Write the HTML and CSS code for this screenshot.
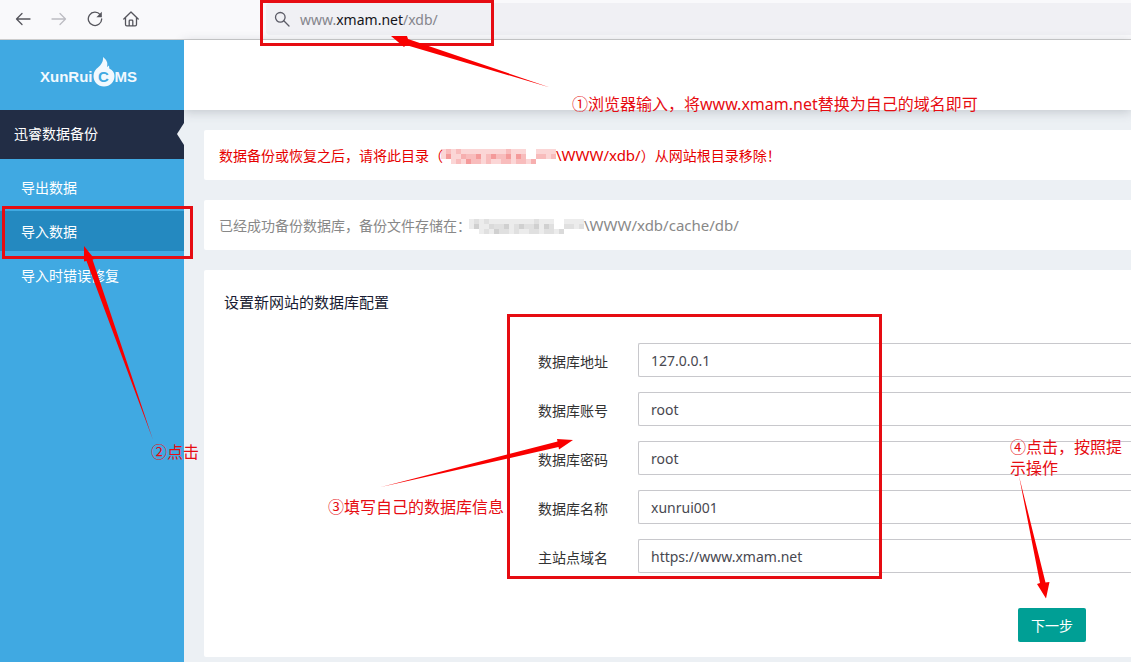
FILE: index.html
```html
<!DOCTYPE html>
<html lang="zh-CN">

<head>
    <meta charset="UTF-8">
    <meta name="viewport" content="width=device-width, initial-scale=1.0">
    <title>迅睿数据备份</title>
    <link rel="stylesheet" href="styles.css">
</head>

<body>

    <div class="browser-bar">
        <div class="browser-buttons">
            <button type="button" aria-label="后退">
                <svg viewBox="0 0 16 16" width="16" height="16"><path d="M15 8H1.5M7 2.5L1.5 8L7 13.5"/></svg>
            </button>
            <button type="button" class="disabled" aria-label="前进" disabled>
                <svg viewBox="0 0 16 16" width="16" height="16"><path d="M1 8h13.5M9 2.5L14.5 8L9 13.5"/></svg>
            </button>
            <button type="button" aria-label="刷新">
                <svg viewBox="0 0 16 16" width="16" height="16"><path d="M13.2 3.6A6.7 6.7 0 1 0 14.7 8"/><path class="solid" d="M14.8 .8v5.4H9.4z"/></svg>
            </button>
            <button type="button" aria-label="主页">
                <svg viewBox="0 0 16 16" width="16" height="16"><path d="M.8 8L8 1l7.200 7M2.500 6.800v6.700q0 1.300 1.300 1.300h8.400q1.300 0 1.300-1.300V6.800M6.200 14.500V10q0-.8.8-.8h2q.8 0 .8.8v4.500"/></svg>
            </button>
        </div>
        <div class="address-bar">
            <svg viewBox="0 0 16 16" width="16" height="16"><circle cx="6.300" cy="6.300" r="4.800"/><path d="M9.800 9.800L15 15"/></svg>
            <div class="url" role="textbox" aria-label="地址" contenteditable="true" spellcheck="false">www.<b>xmam.net</b>/xdb/</div>
        </div>
    </div>

    <div class="page">
        <aside class="sidebar">
            <a href="#" class="logo" aria-label="XunRuiCMS">
                <span>XunRui</span>
                <span class="flame">
                    <svg viewBox="0 0 22 30" width="22" height="30"><path d="M10 0c4 3 5 6 4 10l2-1.500.3 3C20 13 21.500 16 21.500 19c0 6-4.500 10.500-10.500 10.500S.5 25 .5 19c0-4 2-6.500 4.500-8.500C8 8 10.500 4.500 10 0z"/></svg>
                    <b>C</b>
                </span>
                <span>MS</span>
            </a>
            <h1 class="menu-title">迅睿数据备份</h1>
            <nav class="menu">
                <a href="#">导出数据</a>
                <a href="#" class="active">导入数据</a>
                <a href="#">导入时错误修复</a>
            </nav>
        </aside>

        <main class="main">
            <div class="topbar"></div>
            <div class="content">
                <div class="note note-danger">
                    数据备份或恢复之后，请将此目录（<svg class="mosaic" viewBox="0 0 23 3" width="115" height="15" preserveAspectRatio="none" shape-rendering="crispEdges">
                        <g id="mosaic">
                            <path opacity=".16" d="M0 0h17v2H0zM2 2h17v1H2zM19 0h4v2h-4z"/>
                            <path opacity=".12" d="M1 0h1v2H1zM3 0h1v1H3zM5 1h3v2H5zM9 1h5v1H9zM13 0h1v1h-1zM15 1h2v2h-2zM19 1h2v1h-2zM22 1h1v1h-1zM3 2h1v1H3zM9 2h1v1H9zM12 2h2v1h-2z"/>
                            <path opacity=".18" d="M1 1h1v1H1zM4 1h1v1H4zM7 1h1v1H7zM10 1h1v1h-1zM13 1h1v1h-1zM15 1h1v1h-1zM5 2h1v1H5zM18 2h1v1h-1z"/>
                        </g>
                    </svg><span class="path">\WWW/xdb/</span>）从网站根目录移除！
                </div>
                <div class="note">
                    已经成功备份数据库，备份文件存储在：<svg class="mosaic" viewBox="0 0 23 3" width="115" height="15" preserveAspectRatio="none" shape-rendering="crispEdges"><use href="#mosaic"/></svg><span class="path">\WWW/xdb/cache/db/</span>
                </div>

                <form class="card">
                    <h2>设置新网站的数据库配置</h2>
                    <div class="form-group">
                        <label for="host">数据库地址</label>
                        <input type="text" id="host" value="127.0.0.1">
                    </div>
                    <div class="form-group">
                        <label for="user">数据库账号</label>
                        <input type="text" id="user" value="root">
                    </div>
                    <div class="form-group">
                        <label for="pass">数据库密码</label>
                        <input type="text" id="pass" value="root">
                    </div>
                    <div class="form-group">
                        <label for="dbname">数据库名称</label>
                        <input type="text" id="dbname" value="xunrui001">
                    </div>
                    <div class="form-group">
                        <label for="domain">主站点域名</label>
                        <input type="text" id="domain" value="https://www.xmam.net">
                    </div>
                    <div class="form-actions">
                        <button type="button" class="btn">下一步</button>
                    </div>
                </form>
            </div>
        </main>
    </div>

    <!-- Tutorial marks over the page -->
    <div class="marks">
        <svg width="1131" height="662" viewBox="0 0 1131 662">
            <g class="frames">
                <rect x="261.500" y="1.500" width="231" height="43"/>
                <rect x="3.500" y="207.500" width="188" height="50"/>
                <rect x="508.500" y="315.500" width="372" height="262"/>
            </g>
            <g class="arrows">
                <path d="M391 36L407 36L408 39L550 87.500L406 45L404 47z"/>
                <path d="M84 246L94.500 259L92.500 259.500L153 440L86.500 261L84 261.500z"/>
                <path d="M573 440L559 449.500L558.500 447L381 487L557.500 441.500L557 439z"/>
                <path d="M1046 598.500L1037 584L1040 583L1019 476L1045.500 582.500L1049.500 582z"/>
            </g>
        </svg>
        <p class="mark mark-url">①浏览器输入，将www.xmam.net替换为自己的域名即可</p>
        <p class="mark mark-menu">②点击</p>
        <p class="mark mark-form">③填写自己的数据库信息</p>
        <p class="mark mark-next">④点击，按照提示操作</p>
    </div>

</body>

</html>
```

FILE: styles.css
```css
* {
    margin: 0;
    padding: 0;
    box-sizing: border-box;
}

body {
    position: relative;
    display: flex;
    flex-direction: column;
    min-height: 100vh;
    overflow: hidden;
    font-family: "Noto Sans", "Noto Sans CJK SC", sans-serif;
    font-size: 14px;
    line-height: 20px;
    color: #333;
    background: #ecf0f4;
}

/* Browser bar */
.browser-bar {
    display: flex;
    height: 40px;
    padding: 3px 0 4px 15px;
    background: #f9f9fb;
    border-bottom: 1px solid #ccc;
}

.browser-buttons {
    display: flex;
    align-items: center;
    gap: 20px;
    width: 251px;
}

.browser-buttons button {
    width: 16px;
    height: 16px;
    border: none;
    background: none;
    color: #55555c;
}

.browser-buttons .disabled {
    color: #bcbcc2;
}

.browser-bar svg {
    display: block;
    fill: none;
    stroke: currentColor;
    stroke-width: 1.3;
    stroke-linecap: round;
    stroke-linejoin: round;
}

.browser-bar .solid {
    fill: currentColor;
    stroke: none;
}

.address-bar {
    flex: 1;
    display: flex;
    align-items: center;
    gap: 10px;
    padding-left: 8px;
    color: #5b5b66;
    background: #f0f0f4;
    border-radius: 4px 0 0 4px;
}

.url {
    padding-top: 2px;
    font-size: 14px;
    color: #85858c;
}

.url b {
    font-weight: 400;
    color: #15141a;
}

.page {
    flex: 1;
    display: flex;
}

/* Sidebar */
.sidebar {
    position: relative;
    z-index: 1;
    width: 184px;
    background: #40a9e2;
}

.logo {
    display: flex;
    align-items: center;
    height: 70px;
    padding: 4px 0 0 40px;
    font-family: "Liberation Sans", sans-serif;
    font-size: 15px;
    font-weight: bold;
    color: #f2f9fe;
    text-decoration: none;
}

.flame {
    display: grid;
    place-items: center;
    margin-top: -10px;
}

.flame svg,
.flame b {
    grid-area: 1 / 1;
}

.flame svg {
    fill: currentColor;
}

.flame b {
    padding-top: 10px;
    color: #40a9e2;
}

.menu-title {
    display: flex;
    align-items: center;
    justify-content: space-between;
    height: 49px;
    padding: 0 0 2px 14px;
    font-size: 14px;
    font-weight: 400;
    color: #fff;
    background: #222d45;
}

.menu-title::after {
    content: "";
    border: solid transparent;
    border-width: 11px 7px 11px 0;
    border-right-color: #ecf0f4;
}

.menu {
    display: flex;
    flex-direction: column;
    gap: 4px;
    padding-top: 8px;
}

.menu a {
    padding: 11px 21px 9px;
    color: #fff;
    text-decoration: none;
}

.menu a.active {
    background: #2489c0;
}

/* Content */
.main {
    flex: 1;
    min-width: 0;
}

.topbar {
    height: 70px;
    background: #fff;
    box-shadow: 0 2px 10px rgba(70, 80, 90, 0.25);
}

.content {
    display: flex;
    flex-direction: column;
    gap: 20px;
    padding: 20px 0 5px 20px;
}

.note {
    padding: 16px 15px 14px;
    color: #888;
    background: #fff;
    border-radius: 2px 0 0 2px;
    white-space: nowrap;
}

.note-danger {
    color: #e60000;
}

.path {
    font-size: 15px;
    line-height: 1;
}

.mosaic {
    vertical-align: -3px;
    margin-left: -2px;
    fill: currentColor;
}

.card {
    padding: 20px 0 15px 20px;
    background: #fff;
    border-radius: 2px 0 0 2px;
}

.card h2 {
    margin-bottom: 29px;
    font-size: 15px;
    font-weight: 400;
    line-height: 24px;
    color: #181c32;
}

.form-group {
    display: flex;
    align-items: center;
    gap: 30px;
    margin-bottom: 15px;
}

.form-group label {
    flex: 0 0 384px;
    padding-top: 3px;
    text-align: right;
}

.form-group input {
    flex: 1;
    min-width: 0;
    height: 34px;
    padding: 6px 12px;
    border: 1px solid #c8c8cc;
    border-right: none;
    border-radius: 2px 0 0 2px;
    font-family: inherit;
    font-size: 14px;
    color: #484850;
    background: #fff;
    outline: none;
}

.form-actions {
    display: flex;
    justify-content: flex-end;
    padding: 20px 45px 0 0;
}

.btn {
    height: 34px;
    padding: 0 13px;
    border: none;
    border-radius: 2px;
    font-family: inherit;
    font-size: 14px;
    color: #fff;
    background: #009f95;
    cursor: pointer;
}

/* Tutorial marks */
.marks {
    position: absolute;
    z-index: 2;
    top: 0;
    left: 0;
    pointer-events: none;
}

.marks svg {
    display: block;
}

.frames {
    fill: none;
    stroke: #e60c12;
    stroke-width: 3;
}

.arrows {
    fill: #f90000;
}

.mark {
    position: absolute;
    font-size: 16px;
    line-height: 21px;
    color: #e60c12;
    white-space: nowrap;
}

.mark-url {
    top: 94px;
    left: 572px;
}

.mark-menu {
    top: 442px;
    left: 151px;
}

.mark-form {
    top: 497px;
    left: 328px;
}

.mark-next {
    top: 437px;
    left: 1010px;
    width: 113px;
    white-space: normal;
}
```
